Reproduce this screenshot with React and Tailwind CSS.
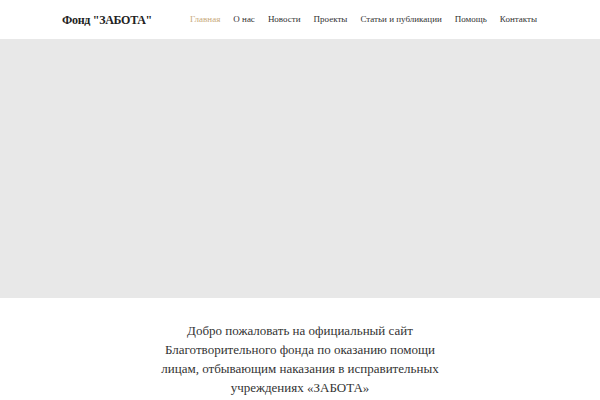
export default function App() {
  const nav = ["Главная", "О нас", "Новости", "Проекты", "Статьи и публикации", "Помощь", "Контакты"];
  return (
    <div className="min-h-screen bg-white text-[#333]" style={{ fontFamily: '"Liberation Serif", "Times New Roman", serif' }}>
      <header className="flex h-[39px] items-center justify-between pl-[62px] pr-[63px]">
        <a className="whitespace-nowrap text-[12px] font-bold tracking-[-0.3px] text-[#222]">Фонд "ЗАБОТА"</a>
        <nav className="flex items-center gap-[13px] whitespace-nowrap text-[9px]">
          {nav.map((item, i) => (
            <a key={item} className={i === 0 ? "text-[#c8a97a]" : "text-[#333]"}>
              {item}
            </a>
          ))}
        </nav>
      </header>
      <div className="h-[259px] bg-[#e8e8e8]" />
      <section className="flex justify-center pt-[23px]">
        <h1 className="text-center text-[13px] leading-[19px] text-[#333]">
          Добро пожаловать на официальный сайт
          <br />
          Благотворительного фонда по оказанию помощи
          <br />
          лицам, отбывающим наказания в исправительных
          <br />
          учреждениях «ЗАБОТА»
        </h1>
      </section>
    </div>
  );
}
